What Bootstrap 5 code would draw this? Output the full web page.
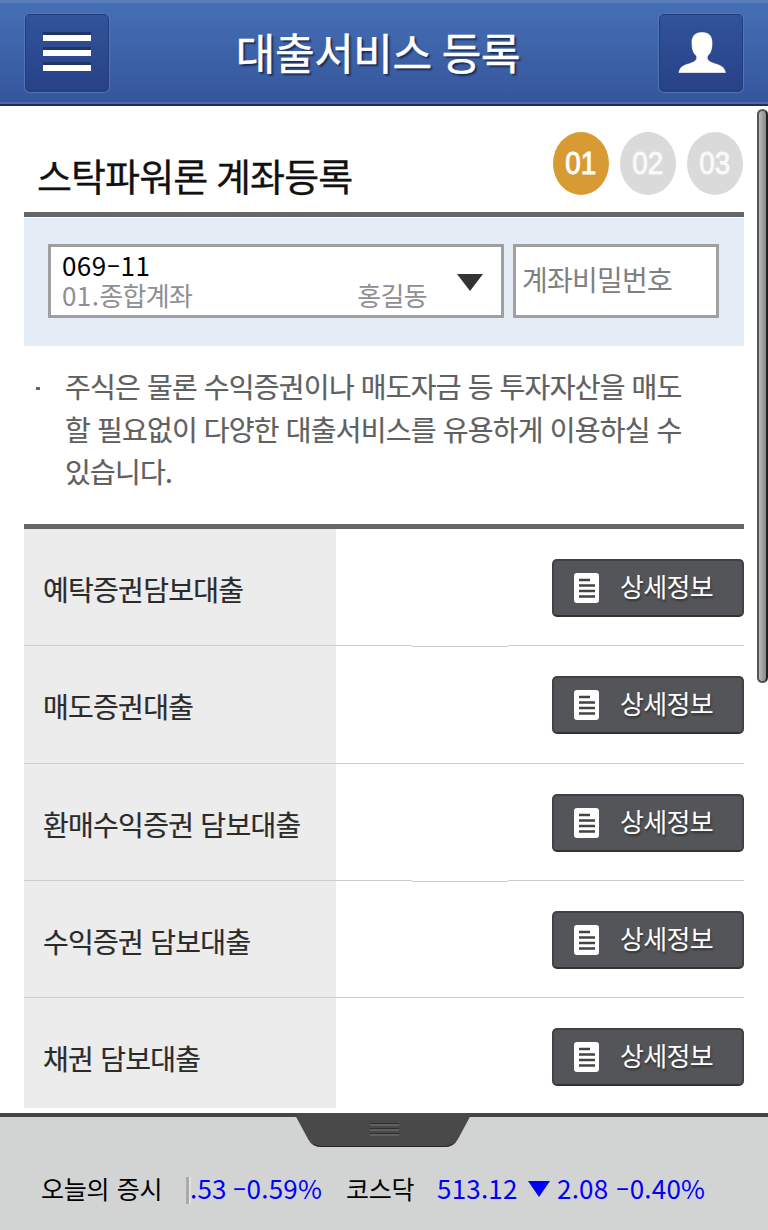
<!DOCTYPE html>
<html lang="ko">
<head>
<meta charset="utf-8">
<meta name="viewport" content="width=device-width, initial-scale=1">
<title>대출서비스 등록</title>
<link href="https://cdn.jsdelivr.net/npm/bootstrap@5.3.0/dist/css/bootstrap.min.css" rel="stylesheet">
<style>
body{font-family:"Noto Sans CJK KR",sans-serif;height:1230px;overflow:hidden;background:#fff;color:#111;font-size:28px;line-height:1;white-space:nowrap}
.topbar{height:106px;padding:11px 25px 0;background:linear-gradient(#456fb5,#35559b);border-top:3px solid #5b7fba;border-bottom:2px solid #1e2d5c;box-shadow:inset 0 -2px #5068a9}
.topbar h1{font-size:43px;line-height:74px;font-weight:400;-webkit-text-stroke:.5px #fff;color:#fff;text-shadow:2px 2px 2px #17274f;margin:0 12px 0 0;letter-spacing:-.4px;word-spacing:-1.500px}
.sqbtn{width:84px;height:78px;padding:0;border:1px solid #223b79;border-radius:5px;background:linear-gradient(#315399,#284187);box-shadow:0 0 0 1px #5376b5;flex:none}
.sqbtn svg{display:block}
.view{height:1007px;overflow:hidden;padding:0 24px;position:relative}
.heading{height:111px;border-bottom:5px solid #666;padding-left:13px}
.heading h2{font-size:38px;font-weight:400;line-height:40px;letter-spacing:-.9px;word-spacing:-1px;margin:49px 0 0;-webkit-text-stroke:.3px #111}
.steps{gap:11px;margin:26px 1px 0 0}
.step{width:56px;height:63px;border-radius:50%;background:#dadada;color:#fff;font:32px/63px "Liberation Sans",sans-serif;-webkit-text-stroke:1px #fff;display:flex;justify-content:center}
.step span{transform:scaleX(.87);opacity:.85}
.step.on{background:#d89a32}.step.on span{opacity:1}
.account{height:128px;background:#e4ecf5;margin-top:1px;padding:26px 24px;gap:9px}
.field{height:74px;border:3px solid #a0a0a0;background:#fff;border-radius:0}
.acct{width:456px;padding:0 11px;color:#8f8f93;font-size:26px;letter-spacing:-.7px}
.acct .num{color:#000;letter-spacing:.4px;line-height:30px}
.acct .sub{line-height:30px}
.acct .lines{margin-top:-2px}
.acct .code{letter-spacing:.4px}
.dash{display:inline-block;transform:scaleX(1.6);margin:0 2.300px}
.pw{width:206px;padding:0 0 0 6px;color:#808080;letter-spacing:-.75px;font-size:28px;line-height:64px}
.note{height:178px;padding:19px 0 0 41px;position:relative;color:#606060;line-height:42.6px;letter-spacing:-.75px;word-spacing:-.2px;-webkit-text-stroke:.2px #606060}
.note::before{content:"";position:absolute;left:12px;top:41px;width:4px;height:3px;background:#666}
.products{border-top:5px solid #666;height:584px;overflow:hidden}
.line{display:grid;grid-template-columns:312px 76px 96px 236px;grid-template-rows:117.33px;height:117.33px}
.line>div{border-bottom:1px solid #ccc}
.line .name{background:#ececec;padding:4px 0 0 19px;line-height:112px;letter-spacing:-.72px;color:#2b2b2b;-webkit-text-stroke:.2px #2b2b2b}
.line .gap2{height:118.33px}
.detail{width:192px;height:58px;margin-top:30px;border:2px solid #414145;border-bottom-color:#333337;border-radius:5px;background:#545558;color:#fff;font-size:26px;letter-spacing:-.7px;line-height:50px;padding:0 0 0 20px;text-shadow:1px 2px 2px #333}
.detail span{margin-top:-4px}
.thumb{position:absolute;left:757px;top:3px;width:11px;height:574px;border:2px solid #555;border-right-color:#222;border-radius:6px;background:linear-gradient(90deg,#bbb,#888)}
.dock{height:117px;background:#d2d4d3;position:relative;border-top:4px solid #444;font-size:25px}
.handle{position:absolute;left:294px;top:-4px}
.ticker{position:absolute;left:41px;right:0;top:53px;height:36px;line-height:36px}
.today{width:145px;letter-spacing:-.3px;word-spacing:1px;color:#000}
.feed{overflow:hidden;color:#0000fa;flex:1;position:relative;display:flex;align-items:center;padding-left:4px}
.feed::before{content:"";position:absolute;left:0;top:7px;width:5px;height:27px;background:linear-gradient(90deg,#aaa 3px,#e1e1e1 3px)}
.feed>span{flex:none;position:relative}
.digits{font-size:26px;letter-spacing:.2px}
.q1{width:156px;word-spacing:-1.500px}.q2{width:91px;color:#000;letter-spacing:-.3px}.q3{width:91px}.q4{width:22px;margin:2px 7px 0 0;flex:none}
</style>
</head>
<body>
<header class="topbar d-flex justify-content-between align-items-start">
  <button class="sqbtn btn" aria-label="메뉴"><svg width="82" height="76"><path d="M17 20h48M17 35h48M17 50h48" stroke="#203568" stroke-width="6"/><path d="M17 23h48M17 38h48M17 53h48" stroke="#fff" stroke-width="6"/></svg></button>
  <h1>대출서비스 등록</h1>
  <button class="sqbtn btn" aria-label="내 정보"><svg width="82" height="76"><path d="M42 17c-7 0-11 4-10.500 12 .2 6 1.500 9 4.500 12 1 4-1 5-6 7-7 2-11 4-11.500 10h47.500c-1-6-5-8-12-10-5-2-7-3-6-7 3-3 4.300-6 4.500-12C53 21 49 17 42 17Z" fill="#fff" stroke="#203568" stroke-opacity=".3" stroke-width="1"/></svg></button>
</header>
<main class="view">
  <div class="heading d-flex justify-content-between align-items-start">
    <h2>스탁파워론 계좌등록</h2>
    <div class="steps d-flex"><div class="step on"><span>01</span></div><div class="step"><span>02</span></div><div class="step"><span>03</span></div></div>
  </div>
  <div class="account d-flex">
    <div class="field acct d-flex align-items-center">
      <div class="lines flex-grow-1"><div class="num">069<span class="dash">-</span>11</div><div class="sub d-flex justify-content-between"><span><span class="code">01.</span>종합계좌</span><span>홍길동</span></div></div>
      <svg class="flex-shrink-0" style="margin:3px 7px 0 30px" width="26" height="17"><path d="M0 0h26L13 17Z" fill="#333"/></svg>
    </div>
    <div class="field pw">계좌비밀번호</div>
  </div>
  <div class="note">주식은 물론 수익증권이나 매도자금 등 투자자산을 매도<br>할 필요없이 다양한 대출서비스를 유용하게 이용하실 수<br>있습니다.</div>
  <div class="products" id="products"></div>
  <div class="thumb"></div>
</main>
<footer class="dock">
  <svg class="handle" width="178" height="36"><path d="M0 0h178L164 26q-4 8-13 8H27q-9 0-13-8Z" fill="#494949"/><path d="M19 31q4 2.500 8 2.500h124q4 0 8-2.500" fill="none" stroke="#252525"/><path d="M76 10.500h29M76 15.500h29M76 20.500h29" stroke="#303030"/><path d="M76 12h29M76 17h29M76 22h29" stroke="#777"/></svg>
  <div class="ticker d-flex">
    <div class="today">오늘의 증시</div>
    <div class="feed"><span class="digits q1">.53 <span class="dash">-</span>0.59%</span><span class="q2">코스닥</span><span class="digits q3">513.12</span><svg class="q4" width="22" height="16"><path d="M0 0h22L11 16Z" fill="#0000fa"/></svg><span class="digits">2.08 <span class="dash">-</span>0.40%</span></div>
  </div>
</footer>
<script>
document.getElementById('products').innerHTML=['예탁증권담보대출','매도증권대출','환매수익증권 담보대출','수익증권 담보대출','채권 담보대출'].map(function(n,i){
 return '<div class="line"><div class="name">'+n+'</div><div></div><div'+(i%2?'':' class="gap2"')+'></div><div class="d-flex justify-content-end align-items-start"><a class="detail btn d-flex align-items-center"><svg width="25" height="30" style="margin-right:21px"><rect width="25" height="30" rx="3" fill="#fff"/><path d="M5 7h11M5 12.500h16M5 18h16M5 23.500h16" stroke="#444" stroke-width="2.500"/></svg><span>상세정보</span></a></div></div>';
}).join('');
</script>
<script src="https://cdn.jsdelivr.net/npm/bootstrap@5.3.0/dist/js/bootstrap.bundle.min.js"></script>
</body>
</html>
